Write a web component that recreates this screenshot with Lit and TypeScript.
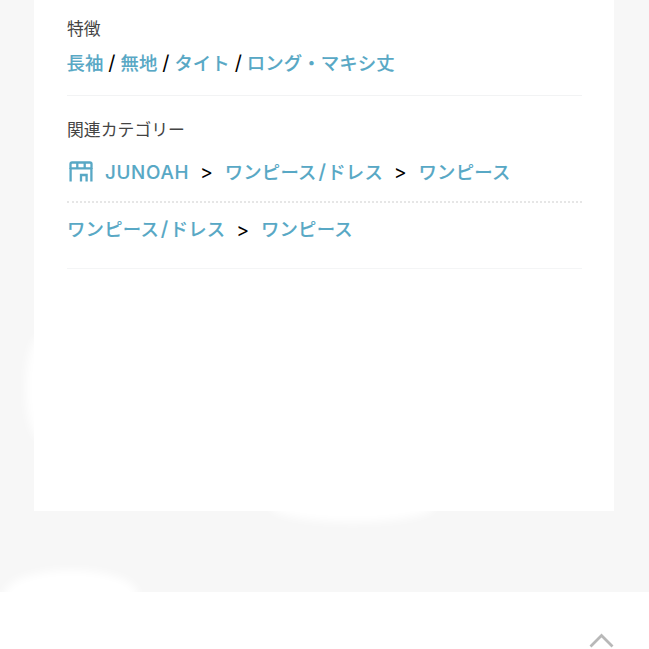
import { LitElement, html, css, svg } from "lit";
import { customElement, property } from "lit/decorators.js";

const shopIcon = svg`
  <svg class="shop" width="24" height="21" viewBox="0 0 24 21" fill="none" stroke="currentColor">
    <path stroke-width="2.300" d="M1.500 8V3.100a1.600 1.600 0 0 1 1.600-1.600h17.800a1.600 1.600 0 0 1 1.600 1.600V8M1 7.300h22M8.300 1.500v6M15.700 1.500v6" />
    <path stroke-width="2.300" d="M1.600 7v13.500M22.400 7v13.500M12 20.500v-6.500h5.600v6.500" />
  </svg>
`;

@customElement("feature-links")
export class FeatureLinks extends LitElement {
  static styles = [
    css`
      :host {
        display: flex;
        align-items: center;
        height: 28px;
        font-size: 18.4px;
        white-space: nowrap;
      }
      a {
        color: #58a8c5;
        -webkit-text-stroke: 0.1px;
        cursor: pointer;
      }
      a:last-child {
        letter-spacing: 0.1px;
      }
      .sep {
        width: 17.2px;
        padding-top: 1px;
        text-align: center;
        font-size: 20px;
        font-weight: 400;
        color: #000;
      }
    `,
  ];

  @property({ attribute: false }) items: string[] = [];

  render() {
    return this.items.map(
      (item, i) => html`${i > 0 ? html`<span class="sep">/</span>` : ""}<a>${item}</a>`
    );
  }
}

@customElement("category-path")
export class CategoryPath extends LitElement {
  static styles = [
    css`
      :host {
        display: flex;
        align-items: center;
        white-space: nowrap;
      }
      a {
        margin-top: -2px;
        color: #58a8c5;
        letter-spacing: 0.2px;
        -webkit-text-stroke: 0.1px;
        cursor: pointer;
      }
      .brand {
        margin-top: 2px;
        font-size: 18.8px;
        letter-spacing: 0.7px;
      }
      .slash {
        margin: 0 1.2px 0 1.8px;
        font-size: 20px;
        line-height: 1;
      }
      .shop {
        margin: 0 12px 0 2px;
        color: #58a8c5;
        flex: none;
      }
      .sep {
        width: 35.5px;
        padding-top: 1px;
        text-align: center;
        text-indent: -1px;
        font-size: 19.5px;
        font-weight: 400;
        color: #000;
      }
    `,
  ];

  @property({ attribute: false }) items: string[] = [];
  @property({ type: Boolean }) shop = false;

  render() {
    return html`
      ${this.shop ? shopIcon : ""}
      ${this.items.map(
        (item, i) => html`${i > 0 ? html`<span class="sep">&gt;</span>` : ""}<a
            class=${this.shop && i === 0 ? "brand" : ""}
            >${item
              .split("/")
              .map((part, j) => html`${j > 0 ? html`<span class="slash">/</span>` : ""}${part}`)}</a
          >`
      )}
    `;
  }
}

@customElement("app-root")
export class AppRoot extends LitElement {
  static styles = [
    css`
      :host {
        display: flex;
        flex-direction: column;
        position: relative;
        height: 649px;
        overflow: hidden;
        background: #fff;
        font-family: Inter, "Noto Sans CJK JP", sans-serif;
        font-size: 18.4px;
        font-weight: 500;
      }
      .page {
        height: 592px;
        box-sizing: border-box;
        padding: 0 35px 0 34px;
        background: #f7f7f7;
      }
      .card {
        position: relative;
        z-index: 1;
        height: 511px;
        box-sizing: border-box;
        padding: 15px 32px 0 33px;
        background: #fff;
      }
      h2 {
        margin: 0;
        height: 28px;
        line-height: 28px;
        font-size: 16.85px;
        font-weight: 400;
        color: #444;
      }
      feature-links {
        margin: 5px 0 0 -0.5px;
      }
      .features {
        height: 80px;
        border-bottom: 1px solid #f2f3f4;
      }
      .categories {
        padding-top: 20px;
        height: 152px;
        border-bottom: 1px solid #f4f5f6;
      }
      .categories category-path {
        height: 59px;
        box-sizing: border-box;
        padding-bottom: 2px;
        border-bottom: 2px dotted #e6e6e6;
      }
      .categories category-path:last-child {
        height: 52px;
        padding: 0;
        border: 0;
      }
      footer {
        flex: 1;
        display: flex;
        justify-content: flex-end;
        padding: 41px 35px 0 0;
      }
      .glow {
        position: absolute;
        background: #fff;
        border-radius: 50%;
        filter: blur(5px);
      }
      .left {
        left: 26px;
        top: 335px;
        width: 30px;
        height: 105px;
      }
      .middle {
        left: 270px;
        top: 490px;
        width: 165px;
        height: 32px;
      }
      .bottom {
        left: 4px;
        top: 570px;
        width: 134px;
        height: 50px;
      }
    `,
  ];

  render() {
    return html`
      <div class="page">
        <div class="card">
          <section class="features">
            <h2>特徴</h2>
            <feature-links .items=${["長袖", "無地", "タイト", "ロング・マキシ丈"]}></feature-links>
          </section>
          <section class="categories">
            <h2>関連カテゴリー</h2>
            <category-path shop .items=${["JUNOAH", "ワンピース/ドレス", "ワンピース"]}></category-path>
            <category-path .items=${["ワンピース/ドレス", "ワンピース"]}></category-path>
          </section>
        </div>
      </div>
      <div class="glow left"></div>
      <div class="glow middle"></div>
      <div class="glow bottom"></div>
      <footer>
        <svg width="25" height="15" viewBox="0 0 25 15" fill="none" stroke="#b8b8b8" stroke-width="2.800">
          <path d="M1.500 13.500 12.500 2.500l11 11" />
        </svg>
      </footer>
    `;
  }
}
